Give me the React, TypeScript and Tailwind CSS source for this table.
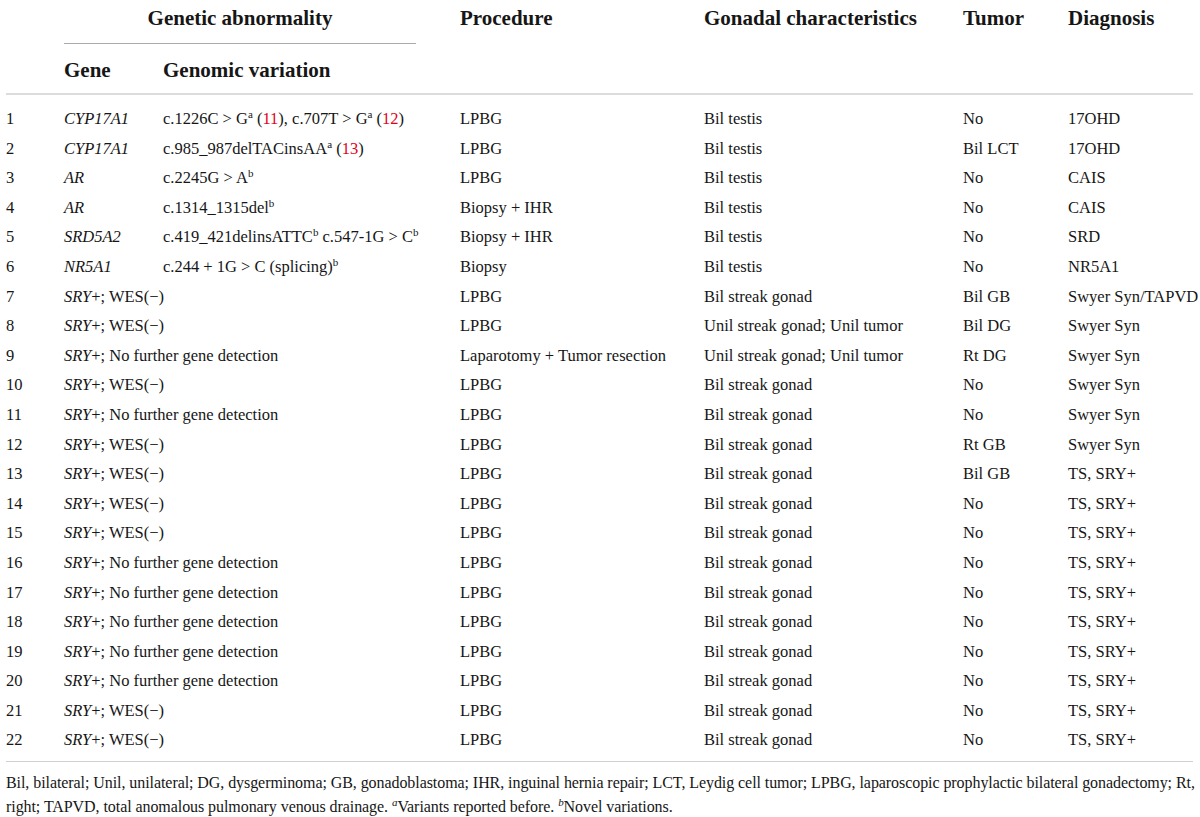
import React from "react";

type Row = {
  gene: React.ReactNode;
  variation?: React.ReactNode;
  procedure: string;
  gonad: string;
  tumor: string;
  diagnosis: string;
};

const Sup = ({ children }: { children: React.ReactNode }) => (
  <sup className="text-[11px] relative -top-[0.55em] align-baseline">{children}</sup>
);

const Ref = ({ n }: { n: number }) => (
  <>
    (<span className="text-[#e2001a]">{n}</span>)
  </>
);

const sryWes = (
  <>
    <i>SRY</i>+; WES(&minus;)
  </>
);
const sryNo = (
  <>
    <i>SRY</i>+; No further gene detection
  </>
);

const rows: Row[] = [
  {
    gene: <i>CYP17A1</i>,
    variation: (
      <>
        c.1226C &gt; G<Sup>a</Sup> <Ref n={11} />, c.707T &gt; G<Sup>a</Sup> <Ref n={12} />
      </>
    ),
    procedure: "LPBG",
    gonad: "Bil testis",
    tumor: "No",
    diagnosis: "17OHD",
  },
  {
    gene: <i>CYP17A1</i>,
    variation: (
      <>
        c.985_987delTACinsAA<Sup>a</Sup> <Ref n={13} />
      </>
    ),
    procedure: "LPBG",
    gonad: "Bil testis",
    tumor: "Bil LCT",
    diagnosis: "17OHD",
  },
  {
    gene: <i>AR</i>,
    variation: (
      <>
        c.2245G &gt; A<Sup>b</Sup>
      </>
    ),
    procedure: "LPBG",
    gonad: "Bil testis",
    tumor: "No",
    diagnosis: "CAIS",
  },
  {
    gene: <i>AR</i>,
    variation: (
      <>
        c.1314_1315del<Sup>b</Sup>
      </>
    ),
    procedure: "Biopsy + IHR",
    gonad: "Bil testis",
    tumor: "No",
    diagnosis: "CAIS",
  },
  {
    gene: <i>SRD5A2</i>,
    variation: (
      <>
        c.419_421delinsATTC<Sup>b</Sup> c.547-1G &gt; C<Sup>b</Sup>
      </>
    ),
    procedure: "Biopsy + IHR",
    gonad: "Bil testis",
    tumor: "No",
    diagnosis: "SRD",
  },
  {
    gene: <i>NR5A1</i>,
    variation: (
      <>
        c.244 + 1G &gt; C (splicing)<Sup>b</Sup>
      </>
    ),
    procedure: "Biopsy",
    gonad: "Bil testis",
    tumor: "No",
    diagnosis: "NR5A1",
  },
  { gene: sryWes, procedure: "LPBG", gonad: "Bil streak gonad", tumor: "Bil GB", diagnosis: "Swyer Syn/TAPVD" },
  { gene: sryWes, procedure: "LPBG", gonad: "Unil streak gonad; Unil tumor", tumor: "Bil DG", diagnosis: "Swyer Syn" },
  {
    gene: sryNo,
    procedure: "Laparotomy + Tumor resection",
    gonad: "Unil streak gonad; Unil tumor",
    tumor: "Rt DG",
    diagnosis: "Swyer Syn",
  },
  { gene: sryWes, procedure: "LPBG", gonad: "Bil streak gonad", tumor: "No", diagnosis: "Swyer Syn" },
  { gene: sryNo, procedure: "LPBG", gonad: "Bil streak gonad", tumor: "No", diagnosis: "Swyer Syn" },
  { gene: sryWes, procedure: "LPBG", gonad: "Bil streak gonad", tumor: "Rt GB", diagnosis: "Swyer Syn" },
  { gene: sryWes, procedure: "LPBG", gonad: "Bil streak gonad", tumor: "Bil GB", diagnosis: "TS, SRY+" },
  { gene: sryWes, procedure: "LPBG", gonad: "Bil streak gonad", tumor: "No", diagnosis: "TS, SRY+" },
  { gene: sryWes, procedure: "LPBG", gonad: "Bil streak gonad", tumor: "No", diagnosis: "TS, SRY+" },
  { gene: sryNo, procedure: "LPBG", gonad: "Bil streak gonad", tumor: "No", diagnosis: "TS, SRY+" },
  { gene: sryNo, procedure: "LPBG", gonad: "Bil streak gonad", tumor: "No", diagnosis: "TS, SRY+" },
  { gene: sryNo, procedure: "LPBG", gonad: "Bil streak gonad", tumor: "No", diagnosis: "TS, SRY+" },
  { gene: sryNo, procedure: "LPBG", gonad: "Bil streak gonad", tumor: "No", diagnosis: "TS, SRY+" },
  { gene: sryNo, procedure: "LPBG", gonad: "Bil streak gonad", tumor: "No", diagnosis: "TS, SRY+" },
  { gene: sryWes, procedure: "LPBG", gonad: "Bil streak gonad", tumor: "No", diagnosis: "TS, SRY+" },
  { gene: sryWes, procedure: "LPBG", gonad: "Bil streak gonad", tumor: "No", diagnosis: "TS, SRY+" },
];

export default function App() {
  return (
    <div className="w-[1200px] h-[817px] bg-white text-[#161616] font-['Liberation_Serif',serif] pl-[6px] pr-[7px] overflow-hidden">
      <table className="w-[1187px] table-fixed border-collapse text-[16.5px]">
        <colgroup>
          <col className="w-[58px]" />
          <col className="w-[99px]" />
          <col className="w-[297px]" />
          <col className="w-[244px]" />
          <col className="w-[259px]" />
          <col className="w-[105px]" />
          <col className="w-[125px]" />
        </colgroup>
        <thead className="font-bold text-[21px]">
          <tr className="h-[44px]">
            <th />
            <th colSpan={2} className="p-0 align-top text-left">
              <div className="w-[352px] h-[44px] border-b border-[#ababab] text-center pt-[5px] leading-[26px]">
                Genetic abnormality
              </div>
            </th>
            <th className="p-0 align-top text-left pt-[5px] leading-[26px]">Procedure</th>
            <th className="p-0 align-top text-left pt-[5px] leading-[26px]">Gonadal characteristics</th>
            <th className="p-0 align-top text-left pt-[5px] leading-[26px]">Tumor</th>
            <th className="p-0 align-top text-left pt-[5px] leading-[26px]">Diagnosis</th>
          </tr>
          <tr className="h-[50px] border-b-2 border-[#dcdcdc]">
            <th />
            <th className="p-0 align-top text-left pt-[13px] leading-[26px]">Gene</th>
            <th className="p-0 align-top text-left pt-[13px] leading-[26px]">Genomic variation</th>
            <th />
            <th />
            <th />
            <th />
          </tr>
        </thead>
        <tbody className="border-b border-[#d0d0d0]">
          <tr className="h-[10px]">
            <td colSpan={7} />
          </tr>
          {rows.map((r, i) => (
            <tr key={i} className="h-[29.6px] leading-[29.6px]">
              <td className="p-0 whitespace-nowrap">{i + 1}</td>
              {r.variation ? (
                <>
                  <td className="p-0 whitespace-nowrap">{r.gene}</td>
                  <td className="p-0 whitespace-nowrap">{r.variation}</td>
                </>
              ) : (
                <td colSpan={2} className="p-0 whitespace-nowrap">
                  {r.gene}
                </td>
              )}
              <td className="p-0 whitespace-nowrap">{r.procedure}</td>
              <td className="p-0 whitespace-nowrap">{r.gonad}</td>
              <td className="p-0 whitespace-nowrap">{r.tumor}</td>
              <td className="p-0 whitespace-nowrap">{r.diagnosis}</td>
            </tr>
          ))}
          <tr className="h-[6px]">
            <td colSpan={7} />
          </tr>
        </tbody>
      </table>
      <div className="w-[1187px] text-[16px] tracking-[-0.07px] leading-[24px] pt-[9px]">
        <p className="whitespace-nowrap">
          Bil, bilateral; Unil, unilateral; DG, dysgerminoma; GB, gonadoblastoma; IHR, inguinal hernia repair; LCT,
          Leydig cell tumor; LPBG, laparoscopic prophylactic bilateral gonadectomy; Rt,
        </p>
        <p className="whitespace-nowrap">
          right; TAPVD, total anomalous pulmonary venous drainage. <sup className="italic text-[11px]">a</sup>Variants
          reported before. <sup className="italic text-[11px]">b</sup>Novel variations.
        </p>
      </div>
    </div>
  );
}
